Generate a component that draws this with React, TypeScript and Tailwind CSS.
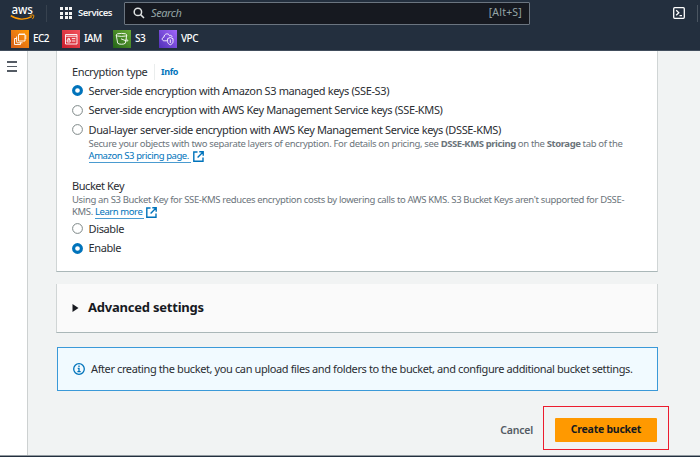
import type { ReactNode } from "react";

function AwsLogo() {
  return (
    <svg width="26" height="26" viewBox="0 0 26 26" className="shrink-0 overflow-visible">
      <text x="0.4" y="13.7" textLength="21.6" lengthAdjust="spacingAndGlyphs" fontFamily="Noto Sans, sans-serif" fontSize="12.4" fontWeight="500" fill="#fff">aws</text>
      <path d="M-.2 15.700c6.200 4.300 14.800 4.400 21 1" fill="none" stroke="#f90" strokeWidth="1.400" />
      <path d="M18.700 15.500c1.300-.6 3.800-.6 4.100-.2s-.2 2.600-1.500 3.800" fill="none" stroke="#f90" strokeWidth="1" />
    </svg>
  );
}

function Grid() {
  return (
    <div className="grid grid-cols-3 gap-[1.5px]">
      {Array.from({ length: 9 }, (_, i) => (
        <i key={i} className="size-[3px] bg-[#f2f3f3]" />
      ))}
    </div>
  );
}

const stroke = { fill: "none", stroke: "#fff", strokeWidth: 0.9 } as const;

function Service({ tile, width, label, children }: { tile: string; width: string; label: string; children: ReactNode }) {
  return (
    <div className={`flex items-center gap-[4px] ${width}`}>
      <div className={`size-[18px] shrink-0 ${tile}`}>
        <svg viewBox="0 0 18 18" className="size-[18px]" {...stroke}>{children}</svg>
      </div>
      <span className="text-[10px] font-medium tracking-[-0.55px] text-white">{label}</span>
    </div>
  );
}

function Radio({ on, children }: { on?: boolean; children: ReactNode }) {
  return (
    <div className="flex h-[19.5px] items-center gap-[5.500px]">
      <svg width="11" height="11" viewBox="0 0 11 11" className="shrink-0">
        {on ? (
          <circle cx="5.5" cy="5.5" r="3.9" fill="#fff" stroke="#0073bb" strokeWidth="3.1" />
        ) : (
          <circle cx="5.5" cy="5.5" r="4.9" fill="#fff" stroke="#7d8787" strokeWidth="1" />
        )}
      </svg>
      <span className="text-[11px] leading-[16px] tracking-[-0.37px]">{children}</span>
    </div>
  );
}

function ExtLink({ children }: { children: ReactNode }) {
  return (
    <span className="inline-flex items-center gap-[2px] align-top tracking-[-0.43px] text-[#0073bb]">
      <span className="h-[12.5px] border-b border-[#4a9bd0] pr-[2px]">{children}</span>
      <svg width="11" height="11" viewBox="0 0 11 11" fill="none" stroke="#0073bb" strokeWidth="1.4">
        <path d="M4.500 1H.8v9.200H10V6.500M6.300.8H10.200V4.700M10 1L4.600 6.400" />
      </svg>
    </span>
  );
}

export default function App() {
  return (
    <div className="flex h-[457px] w-[700px] flex-col overflow-hidden bg-[#f1f3f3] font-['Noto_Sans','Open_Sans',sans-serif] text-[#2b2e33]">
      <header className="h-[51px] shrink-0 border-b border-[#414d5c] bg-[#232f3e]">
        <div className="flex h-[26px] items-center pl-[11px]">
          <AwsLogo />
          <div className="ml-[9px] h-[17px] w-px bg-[#37424f]" />
          <div className="ml-[13px]"><Grid /></div>
          <span className="ml-[6px] w-[36px] text-[9.5px] font-semibold tracking-[-0.48px] text-[#f2f3f3]">Services</span>
          <div className="ml-[10px] flex h-[23px] w-[406px] shrink-0 items-center rounded-[1px] border border-[#6b7580] bg-[#161920] pr-[7px] pl-[8px]">
            <svg width="12" height="12" viewBox="0 0 12 12" fill="none" stroke="#e0e3e3" strokeWidth="1.5">
              <circle cx="4.900" cy="4.900" r="3.700" />
              <path d="M7.600 7.600L11 11" />
            </svg>
            <span className="ml-[6px] flex-1 text-[11px] tracking-[-0.4px] text-[#95a5a6] italic">Search</span>
            <span className="text-[10.5px] tracking-[0.2px] text-[#95a5a6]">[Alt+S]</span>
          </div>
          <svg width="12" height="12" viewBox="0 0 12 12" fill="none" stroke="#fff" strokeWidth="1.3" className="ml-[143px] shrink-0">
            <rect x=".7" y=".7" width="10.600" height="10.600" rx="1" />
            <path d="M3.200 3.200L5.800 5.700L3.200 8.200M6.500 8.600H9" />
          </svg>
          <div className="ml-[12px] h-[17px] w-px bg-[#4a5561]" />
        </div>
        <div className="flex h-[25px] items-center pl-[11px]">
          <Service tile="bg-gradient-to-tr from-[#d45c17] to-[#f90]" width="w-[51px]" label="EC2">
            <path d="M7.500 4.500h6.500v6.500h-6.500zM5.600 8.500H3.500v6H9.500V12.500M5.600 6.500V11.800a1 1 0 0 0 1 1H11.500M9 3v1.500M11 3v1.500M13 3v1.500M14 6h1.500M14 8h1.500" />
          </Service>
          <Service tile="bg-gradient-to-tr from-[#c71a2c] to-[#f4525c]" width="w-[51px]" label="IAM">
            <path d="M3.500 4.500h11.500v9.500H3.500zM3.500 6.200h11.500M9.800 8.600h3.500M9.800 11h3.500M5.200 12V10h3v2zM5.900 10V8.400h1.600V10" />
          </Service>
          <Service tile="bg-gradient-to-tr from-[#226318] to-[#69ac35]" width="w-[46px]" label="S3">
            <ellipse cx="8.500" cy="4.900" rx="5.300" ry="1.500" />
            <path d="M3.200 5L4.700 13.200c1 1.400 6.600 1.400 7.600 0L13.800 5M8 8.800l5 2c2.500 1 2.300-.9.100-1.900" />
          </Service>
          <Service tile="bg-gradient-to-tr from-[#5130b8] to-[#a365fb]" width="w-[50px]" label="VPC">
            <path d="M8 10.800H5.200C2.700 10.800 2.500 7.500 5 7.200C5 3.500 9.600 2.700 10.500 5.700C12 4.800 13 5.800 13 7" />
            <path d="M11.300 7.500L14 8.600v3c0 1.500-1.200 2.600-2.700 3.200c-1.500-.6-2.700-1.700-2.700-3.200v-3zM11.300 9.500v3.500" />
          </Service>
        </div>
      </header>

      <div className="flex min-h-0 flex-1">
        <aside className="w-[28px] shrink-0 border-r border-[#cdd1d1] bg-white pt-[10px] pl-[7px]">
          <div className="flex w-[10px] flex-col gap-[3px]">
            <i className="h-[1.500px] bg-[#545b64]" />
            <i className="h-[1.500px] bg-[#545b64]" />
            <i className="h-[1.500px] bg-[#545b64]" />
          </div>
        </aside>

        <main className="ml-[28px] w-[613px] whitespace-nowrap">
          <section className="h-[221px] w-[602px] border border-t-0 border-[#d0d5d5] border-b-[#aab7b8] bg-white pt-[12px] pl-[15px]">
            <div className="flex h-[18px] items-center text-[11px] tracking-[-0.36px]">
              <span className="w-[76px]">Encryption type</span>
              <span className="ml-[6px] h-[16px] w-px bg-[#eaeded]" />
              <span className="ml-[6px] text-[9px] font-bold tracking-[-0.35px] text-[#0073bb]">Info</span>
            </div>
            <Radio on>Server-side encryption with Amazon S3 managed keys (SSE-S3)</Radio>
            <Radio>Server-side encryption with AWS Key Management Service keys (SSE-KMS)</Radio>
            <Radio>Dual-layer server-side encryption with AWS Key Management Service keys (DSSE-KMS)</Radio>
            <div className="-mt-[2px] ml-[16.500px] text-[9.500px] leading-[12.500px] tracking-[-0.34px] text-[#6b747b]">
              <p>Secure your objects with two separate layers of encryption. For details on pricing, see <b className="font-bold tracking-[-0.42px]">DSSE-KMS pricing</b> on the <b className="font-bold tracking-[-0.42px]">Storage</b> tab of the</p>
              <p><ExtLink>Amazon S3 pricing page.</ExtLink></p>
            </div>
            <div className="mt-[15px] text-[11px] leading-[16px] tracking-[-0.45px]">Bucket Key</div>
            <div className="mb-[0.500px] text-[9.500px] leading-[12.500px] tracking-[-0.35px] text-[#6b747b]">
              <p>Using an S3 Bucket Key for SSE-KMS reduces encryption costs by lowering calls to AWS KMS. S3 Bucket Keys aren't supported for DSSE-</p>
              <p>KMS. <ExtLink>Learn more</ExtLink></p>
            </div>
            <Radio>Disable</Radio>
            <Radio on>Enable</Radio>
          </section>

          <section className="mt-[12px] flex h-[49px] w-[602px] items-center border border-t-0 border-[#d0d5d5] border-b-[#aab7b8] bg-[#fafafa] pl-[15px]">
            <svg width="7" height="8" viewBox="0 0 7 8"><path d="M.5 0L6.500 4L.5 8z" fill="#16191f" /></svg>
            <h2 className="ml-[9px] text-[13px] font-bold tracking-[-0.22px] text-[#16191f]">Advanced settings</h2>
          </section>

          <div className="mt-[14px] ml-px flex h-[44px] w-[601px] items-center border border-[#3b99d8] bg-[#f1faff] pl-[15px]">
            <svg width="12" height="12" viewBox="0 0 12 12" fill="none" stroke="#0073bb" strokeWidth="1.300">
              <circle cx="6" cy="6" r="5.300" />
              <path d="M6 2.600v1.400M4.700 5.300H6V8.700M4.400 8.700h3.300" />
            </svg>
            <span className="ml-[6px] text-[11px] tracking-[-0.39px]">After creating the bucket, you can upload files and folders to the bucket, and configure additional bucket settings.</span>
          </div>

          <div className="mt-[15px] flex items-center justify-end">
            <span className="mt-[5px] mr-[10px] text-[10.500px] font-semibold tracking-[-0.2px] text-[#545b64]">Cancel</span>
            <div className="flex h-[44px] w-[126px] items-center justify-center border-[1.500px] border-[#ec1c2e] pt-[4px]">
              <button className="h-[24px] w-[102px] rounded-[1px] bg-[#f90] text-[10.500px] font-bold tracking-[-0.25px] text-[#16191f]">Create bucket</button>
            </div>
          </div>
        </main>
      </div>
      <footer className="h-[2px] shrink-0 border-t border-[#929aa0] bg-[#232f3e]" />
    </div>
  );
}
